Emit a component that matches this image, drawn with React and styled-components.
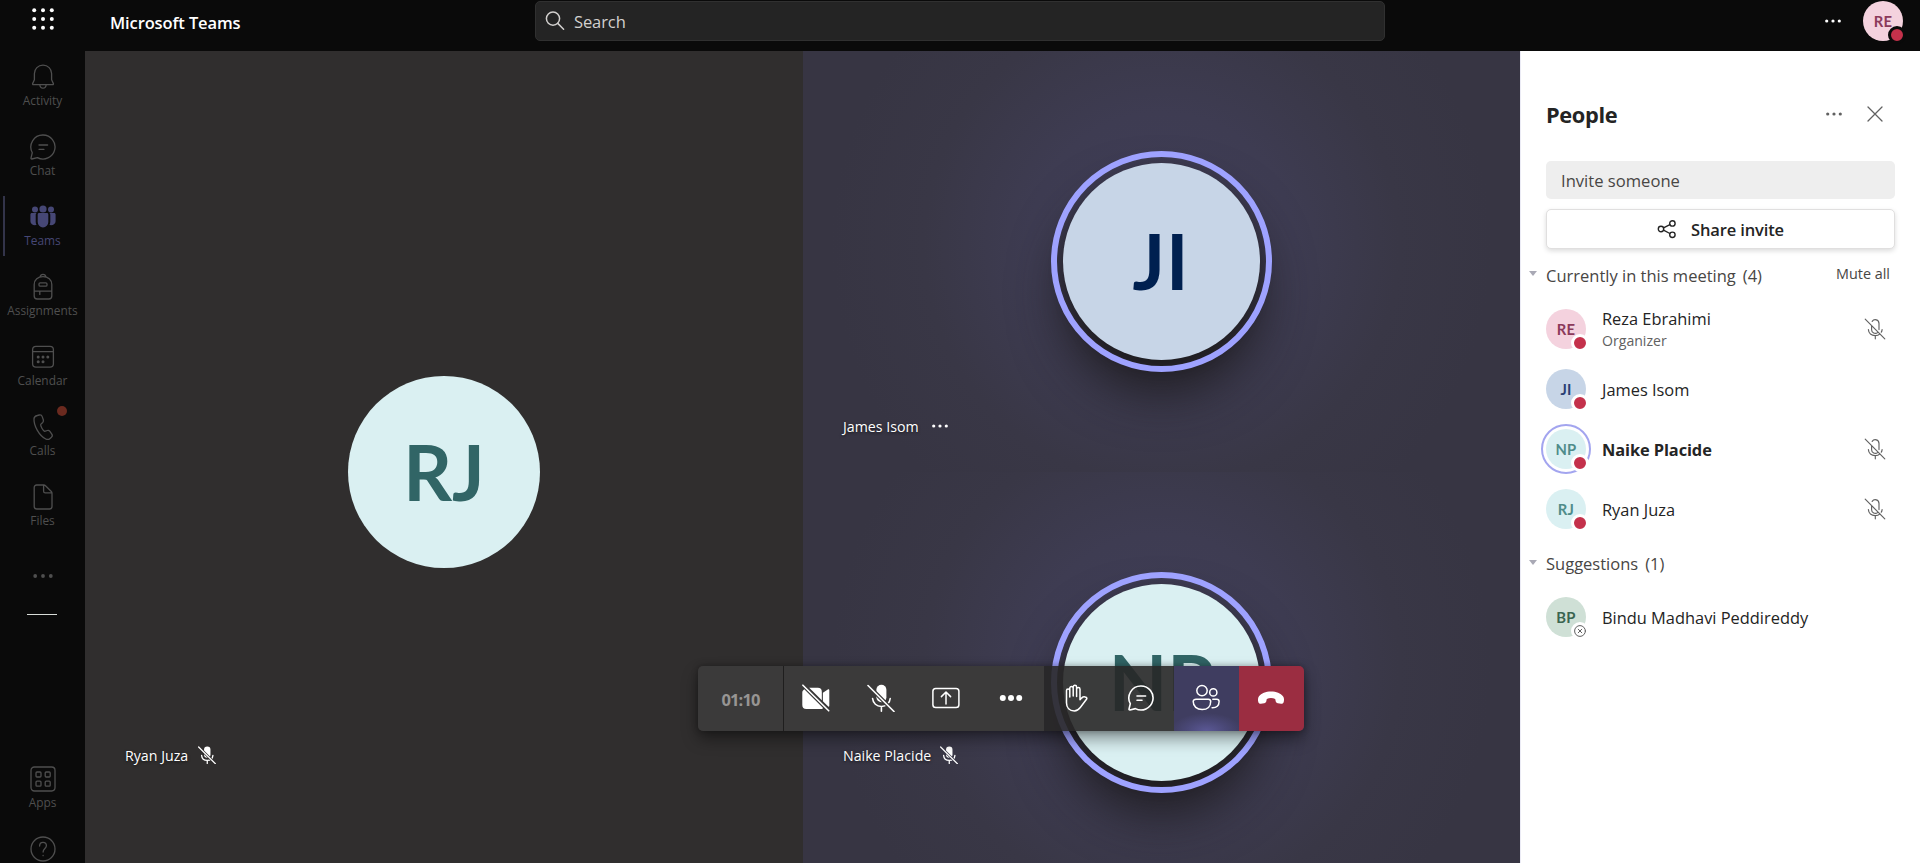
import React from "react";
import styled, { createGlobalStyle, css } from "styled-components";

const GlobalStyle = createGlobalStyle`
  * { box-sizing: border-box; }
  body {
    margin: 0;
    overflow: hidden;
    background: #0a0a0a;
    font-family: "Open Sans", "Noto Sans", "Liberation Sans", sans-serif;
    color: #242424;
  }
  button, input { font: inherit; color: inherit; border: 0; margin: 0; padding: 0; background: none; }
`;

const App = styled.div`
  display: flex;
  flex-direction: column;
  height: 100vh;
  overflow: hidden;
`;

/* ---------- header ---------- */
const Header = styled.header`
  flex: none;
  height: 51px;
  display: grid;
  grid-template-columns: 85px 450px 850px 1fr;
  align-items: start;
  background: #0a0a0a;
  color: #fff;
`;
const Waffle = styled.div`
  height: 38px;
  display: flex;
  justify-content: center;
  align-items: center;
  svg { margin-left: 1px; }
`;
const Brand = styled.div`
  padding-left: 25px;
  height: 45px;
  line-height: 45px;
  font-size: 16.5px;
  font-weight: 600;
  letter-spacing: -0.12px;
`;
const SearchBox = styled.div`
  margin-top: 1px;
  height: 40px;
  display: flex;
  align-items: center;
  gap: 9px;
  padding-left: 9px;
  border: 1px solid #303030;
  border-radius: 5px;
  background: #242424;
  color: #d2d0ce;
  font-size: 16.5px;
  letter-spacing: -0.1px;
`;
const HeaderEnd = styled.div`
  height: 42px;
  display: flex;
  align-items: center;
  justify-content: flex-end;
  gap: 20px;
  padding-right: 17px;
`;

/* ---------- layout ---------- */
const Body = styled.div`
  flex: 1;
  min-height: 0;
  display: grid;
  grid-template-columns: 85px 1435px 400px;
`;
const Rail = styled.nav`
  background: #0a0a0a;
  display: flex;
  flex-direction: column;
  height: 812px;
  overflow: hidden;
`;
const RailItem = styled.div`
  position: relative;
  flex: none;
  height: 70px;
  padding-top: 12px;
  display: flex;
  flex-direction: column;
  align-items: center;
  font-size: 11.9px;
  line-height: 18px;
  color: ${(p) => (p.$active ? "#464775" : "#4f4f4f")};
  svg { display: block; flex: none; }
  ${(p) => p.$active && css`
    &::before {
      content: "";
      position: absolute;
      left: 3px;
      top: 5px;
      width: 2px;
      height: 60px;
      background: #33344a;
    }
  `}
`;
const RailMore = styled(RailItem)`
  padding-top: 21px;
`;
const Alert = styled.span`
  position: absolute;
  left: 57px;
  top: 5px;
  width: 10px;
  height: 10px;
  border-radius: 50%;
  background: #6b2a1f;
`;
const RailLine = styled.div`
  flex: none;
  width: 30px;
  height: 1px;
  margin: 3px 0 138px 27px;
  background: #d8dcd8;
`;

/* ---------- stage ---------- */
const Stage = styled.main`
  position: relative;
  display: grid;
  grid-template-columns: 718px 717px;
  height: 842px;
  background: #302e2e;
`;
const Column = styled.div`
  display: grid;
  grid-auto-rows: 1fr;
`;
const Tile = styled.section`
  position: relative;
  display: flex;
  align-items: center;
  justify-content: center;
  background: ${(p) =>
    p.$speaking
      ? "radial-gradient(circle 330px at 50% 46%, #403e58 0%, #3e3c52 40%, #393746 72%, #373543 100%)"
      : "#302e2e"};
`;
const BigAvatar = styled.div`
  width: ${(p) => p.$size}px;
  height: ${(p) => p.$size}px;
  border-radius: 50%;
  display: flex;
  align-items: center;
  justify-content: center;
  padding-bottom: 1px;
  padding-right: ${(p) => p.$shift || 0}px;
  font-family: Lato, "Open Sans", sans-serif;
  font-weight: 700;
  font-size: 76px;
  line-height: 1;
  letter-spacing: ${(p) => p.$spacing || 0}px;
  background: ${(p) => p.$bg};
  color: ${(p) => p.$fg};
  ${(p) => p.$ring && css`
    position: relative;
    box-shadow: 0 32px 52px rgba(26, 24, 24, 0.85), 0 6px 14px rgba(26, 24, 24, 0.35);
    &::after {
      content: "";
      position: absolute;
      inset: -12px;
      border: 6px solid #9ea2ff;
      border-radius: 50%;
    }
  `}
`;
const Caption = styled.div`
  position: absolute;
  left: ${(p) => p.$left}px;
  bottom: ${(p) => p.$bottom}px;
  height: 20px;
  display: flex;
  align-items: center;
  gap: ${(p) => p.$gap || 9}px;
  font-size: 14.2px;
  color: #fff;
  text-shadow: 0 1px 3px rgba(0, 0, 0, 0.6);
`;

const Toolbar = styled.div`
  position: absolute;
  left: 613px;
  top: 615px;
  height: 65px;
  display: flex;
  border-radius: 5px;
  overflow: hidden;
  color: #fff;
`;
const ToolbarShadow = styled.div`
  position: absolute;
  left: 613px;
  top: 615px;
  width: 606px;
  height: 65px;
  border-radius: 5px;
  box-shadow: 0 8px 16px rgba(0, 0, 0, 0.4), 0 0 6px rgba(0, 0, 0, 0.3);
`;
const Timer = styled.div`
  width: 86px;
  display: flex;
  align-items: center;
  justify-content: center;
  padding-top: 1px;
  background: #3b3a3a;
  border-right: 1px solid #1f1e1e;
  color: #979593;
  font-size: 16.5px;
  font-weight: 700;
  letter-spacing: -0.9px;
`;
const toolTones = {
  main: "rgba(59, 58, 58, 0.98)",
  side: "rgba(40, 39, 39, 0.9)",
  active: "radial-gradient(ellipse 36px 18px at 50% 100%, #5b5896 0%, #4a4877 55%, rgba(64,62,97,0) 100%), #3f3d60",
  leave: "#9b2d41",
};
const Tool = styled.button`
  width: 65px;
  height: 65px;
  display: flex;
  align-items: center;
  justify-content: center;
  padding: 0 1px 1px 0;
  background: ${(p) => toolTones[p.$tone || "main"]};
`;

/* ---------- people panel ---------- */
const Panel = styled.aside`
  background: #fff;
  border-left: 1px solid #ebebf5;
  padding: 42px 25px 0 25px;
  height: 812px;
`;
const PanelHead = styled.div`
  height: 42px;
  display: flex;
  align-items: center;
  color: #616161;
  h2 {
    margin: 1px auto 0 0;
    font-size: 21.8px;
    line-height: 30px;
    font-weight: 700;
    letter-spacing: -0.35px;
    color: #242424;
  }
  svg { margin-right: 11px; }
  svg + svg { margin-left: 12px; margin-right: 12px; }
`;
const Invite = styled.div`
  margin-top: 26px;
  height: 38px;
  line-height: 39px;
  padding-left: 15px;
  border-radius: 5px;
  background: #eeeeee;
  color: #484644;
  font-size: 16.6px;
`;
const ShareButton = styled.button`
  margin-top: 10px;
  width: 100%;
  height: 40px;
  display: flex;
  align-items: center;
  justify-content: center;
  gap: 14px;
  border: 1px solid #e0dfdf;
  border-radius: 5px;
  background: #fff;
  box-shadow: 0 2px 5px rgba(0, 0, 0, 0.14);
  font-size: 16.5px;
  font-weight: 600;
  letter-spacing: -0.15px;
  span { padding-top: 1px; }
`;
const SectionHead = styled.div`
  position: relative;
  height: ${(p) => p.$height}px;
  padding-top: ${(p) => p.$drop || 0}px;
  display: flex;
  align-items: center;
  gap: 7px;
  font-size: 16.5px;
  color: #484644;
`;
const Caret = styled.i`
  position: absolute;
  left: -17px;
  top: calc(50% - 3px);
  border: 4px solid transparent;
  border-top: 5px solid #a9a9b5;
  border-bottom: 0;
`;
const MuteAll = styled.span`
  margin: -3px 5px 0 auto;
  font-size: 14.4px;
`;
const PersonRow = styled.div`
  height: 60px;
  display: flex;
  align-items: center;
  padding-right: 10px;
`;
const PersonText = styled.div`
  margin-left: 16px;
  margin-right: auto;
  font-size: 16.4px;
  line-height: 22px;
  padding-top: ${(p) => (p.$double ? 2 : 1)}px;
  font-weight: ${(p) => (p.$bold ? 700 : 400)};
  letter-spacing: ${(p) => (p.$bold ? -0.1 : 0)}px;
  small { display: block; font-size: 14.1px; line-height: 22px; color: #616161; }
`;
const SmallAvatar = styled.div`
  position: relative;
  width: 40px;
  height: 40px;
  border-radius: 50%;
  display: flex;
  align-items: center;
  justify-content: center;
  font-family: Lato, "Open Sans", sans-serif;
  font-size: 14.8px;
  font-weight: 700;
  letter-spacing: 0.2px;
  background: ${(p) => p.$bg};
  color: ${(p) => p.$fg};
  ${(p) => p.$ring && css`
    &::before {
      content: "";
      position: absolute;
      inset: -5px;
      border: 2px solid #a3a5ef;
      border-radius: 50%;
    }
  `}
`;
const Presence = styled.span`
  position: absolute;
  right: -3px;
  bottom: -3px;
  width: 18px;
  height: 18px;
  border-radius: 50%;
  border: 3px solid ${(p) => p.$edge || "#fff"};
  background: ${(p) => (p.$offline ? "#fff" : "#c4314b")};
  color: #616161;
  svg { display: block; }
`;
const MutedMark = styled.span`
  display: flex;
  color: #616161;
  margin-right: -1px;
`;

/* ---------- icons ---------- */
const Svg = ({ size = 28, box, sw = 1.5, children }) => (
  <svg width={size} height={size} viewBox={box || `0 0 ${size} ${size}`} fill="none"
    stroke="currentColor" strokeWidth={sw} strokeLinecap="round" strokeLinejoin="round">
    {children}
  </svg>
);
const Dots = ({ gap = 6.3, r = 1.6, size = 20 }) => (
  <Svg size={size}>
    <g fill="currentColor" stroke="none">
      {[-1, 0, 1].map((n) => <circle key={n} cx={size / 2 + n * gap} cy={size / 2} r={r} />)}
    </g>
  </Svg>
);
const WaffleIcon = () => (
  <Svg size={24}>
    <g fill="currentColor" stroke="none">
      {[3.2, 12, 20.8].map((y) => [3.2, 12, 20.8].map((x) => <circle key={x + "-" + y} cx={x} cy={y} r="2" />))}
    </g>
  </Svg>
);
const SearchIcon = () => (
  <Svg size={20} sw={1.5}><circle cx="8" cy="7.6" r="6.6" /><path d="m12.8 12.4 5.8 5.8" /></Svg>
);
const BellIcon = () => (
  <Svg sw={1.3}><path d="M14 2.200c-4.900 0-8.600 3.700-8.600 8.400v6.200L3.600 20.600c-.2.5.1 1 .7 1h19.400c.6 0 .9-.5.7-1l-1.800-3.800v-6.200c0-4.700-3.700-8.400-8.600-8.400ZM10.800 21.800c.2 2 1.500 3.400 3.200 3.400s3-1.400 3.200-3.400" /></Svg>
);
const ChatIcon = ({ sw = 1.3 }) => (
  <Svg sw={sw}>
    <path d="M14 2A12 12 0 1 1 8.400 24.600L2.900 26c-.6.1-1-.4-.9-.9l1.300-5.400A12 12 0 0 1 14 2Z" />
    <path d="M10 12h8.600M10 16.300h5" />
  </Svg>
);
const TeamsIcon = () => (
  <Svg>
    <g fill="currentColor" stroke="none">
      <circle cx="6" cy="6.500" r="3" /><circle cx="14" cy="6" r="3.600" /><circle cx="22" cy="6.500" r="3" />
      <path d="M8.700 11.500c0-.8.6-1.400 1.400-1.400h7.800c.8 0 1.400.6 1.400 1.400v7.600a5.300 5.300 0 0 1-10.600 0Z" />
      <path d="M7.600 10.100H2.900c-.9 0-1.500.6-1.500 1.500v6.600c0 2.600 2.600 4.500 6.100 3.800-.5-1-.8-2-.8-3.200v-7.100c0-.6.3-1.200.9-1.600ZM20.400 10.100h4.700c.9 0 1.500.6 1.500 1.500v6.600c0 2.600-2.600 4.500-6.100 3.800.5-1 .8-2 .8-3.200v-7.100c0-.6-.3-1.200-.9-1.600Z" />
    </g>
  </Svg>
);
const BackpackIcon = () => (
  <Svg sw={1.3}>
    <path d="M5.200 11.500C5.200 6.800 9 3.600 14 3.600s8.800 3.200 8.800 7.900V23a3 3 0 0 1-3 3H8.200a3 3 0 0 1-3-3ZM5.200 18.200h17.600M10.800 18.400v3M11.200 3.800c.2-1.600 1.300-2.400 2.800-2.400s2.600.8 2.800 2.400" />
    <rect x="10" y="9.800" width="8" height="3.400" rx="1.200" />
  </Svg>
);
const CalendarIcon = () => (
  <Svg sw={1.3}>
    <rect x="3.600" y="3.400" width="20.800" height="20.800" rx="3.400" /><path d="M3.600 8.600h20.800" />
    <g fill="currentColor" stroke="none">
      {[[9.2, 14], [14, 14], [18.8, 14], [9.2, 18.7], [14, 18.7]].map(([x, y]) => <circle key={x + "," + y} cx={x} cy={y} r="1.500" />)}
    </g>
  </Svg>
);
const PhoneIcon = () => (
  <Svg sw={1.3}><path d="m8.300 2.500 1.900-.5c1.300-.3 2.600.3 3 1.600l1.100 3.200c.3 1 .1 2-.6 2.700l-2 1.900c-.2.9.3 2.300 1.200 3.900s1.900 2.700 2.700 3l2.700-.8c1-.3 2 .1 2.600.9l1.900 2.700c.7 1 .5 2.400-.4 3.200l-1.300 1.100c-1.200 1-2.900 1.300-4.300.6-3.300-1.600-6.200-4.700-8.600-8.900S4.800 9.200 5 5.800c.1-1.600 1.600-2.900 3.300-3.300Z" /></Svg>
);
const FileIcon = () => (
  <Svg sw={1.3}><path d="M7.600 2h7.200c.6 0 1.200.2 1.700.7l5.800 5.800c.4.4.7 1 .7 1.700v13.400A2.400 2.400 0 0 1 20.600 26h-13a2.400 2.400 0 0 1-2.400-2.400V4.400A2.400 2.400 0 0 1 7.600 2ZM14.600 2.200v6c0 1 .7 1.700 1.700 1.700h6.400" /></Svg>
);
const AppsIcon = () => (
  <Svg sw={1.3}>
    <rect x="2" y="2" width="24" height="24" rx="3.400" />
    {[[7, 7], [16.2, 7], [7, 16.2], [16.2, 16.2]].map(([x, y]) => <rect key={x + "," + y} x={x} y={y} width="5" height="5" rx="1" />)}
  </Svg>
);
const HelpIcon = () => (
  <Svg sw={1.3}><circle cx="14" cy="14" r="12" /><path d="M10.600 11c0-2.200 1.400-3.600 3.400-3.600s3.400 1.400 3.400 3.300c0 2.700-3.300 2.900-3.300 6.300M14.100 20.300v.4" /></Svg>
);
const CameraOffIcon = () => (
  <Svg sw={1.6}>
    <g fill="currentColor" stroke="none">
      <path d="M.8 6.800 3 4.600 21.600 23.400c-.8 1-1.600 1.500-2.800 1.500H4.300a4 4 0 0 1-4-4V8.500c0-.6.2-1.200.5-1.700Z" />
      <path d="M7.200 3.700h8.600a4 4 0 0 1 4 4v8.500Z" />
      <path d="m20.900 8.800 4.900-3.400c.7-.5 1.500 0 1.500.8v15.600c0 .5-.3.9-.8 1l-5.600-5.600Z" />
    </g>
    <path d="m.9 1.200 25.800 25.600" stroke="#3b3a3a" strokeWidth="4" />
    <path d="m.9 1.200 25.800 25.600" />
  </Svg>
);
const MicOffFilled = ({ size = 28, cut = "#3b3a3a", sw = 1.6 }) => (
  <Svg size={size} box="0 0 28 28" sw={sw}>
    <rect x="9.400" y=".8" width="10" height="17.500" rx="5" fill="currentColor" stroke="none" />
    <path d="M5.600 14.500c.4 4.700 4 8 8.800 8s8.400-3.300 8.800-8M14.400 22.500v4.700" />
    <path d="m1 1.500 26 26" stroke={cut} strokeWidth="4" />
    <path d="m1 1.500 26 26" />
  </Svg>
);
const MicOffOutline = () => (
  <Svg size={22} sw={1.15}>
    <path d="M7.600 7.500v4.200a3.700 3.700 0 0 0 6 2.900M8.200 3.400a3.700 3.700 0 0 1 6.800 2v6.200M4.400 11.600c.2 3.600 3 6 6.800 6 1.900 0 3.600-.6 4.800-1.700M18.100 11.600c-.1 1-.3 1.900-.8 2.600M11.300 17.700v3.100M1.200 1.200l19.600 19.600" />
  </Svg>
);
const ShareScreenIcon = () => (
  <Svg sw={1.5}><rect x=".9" y="4.400" width="26" height="19.200" rx="2.800" /><path d="M14 20V8.400M9.400 12.600 14 8l4.600 4.600" /></Svg>
);
const HandIcon = () => (
  <Svg sw={1.5}>
    <path d="M3.500 15V6.600c0-1 .7-1.700 1.600-1.700s1.700.7 1.700 1.700V13M6.800 12V4.200c0-1 .8-1.700 1.700-1.700s1.700.7 1.700 1.700V12M10.200 12V2.900c0-1 .8-1.700 1.700-1.700s1.700.7 1.700 1.700V12.500M13.600 12.500V5.200c0-1 .8-1.700 1.700-1.700S17 4.200 17 5.200v10.600l1.600-1.700c1.200-1.200 3-1.500 4.400-.8.900.4 1.100 1.200.5 1.900l-6.200 8.300c-1.500 2-3.200 3.400-6 3.400-4.700 0-7.800-3-7.800-8.200V15" transform="translate(1 0)" />
  </Svg>
);
const PeopleIcon = () => (
  <Svg sw={1.5}>
    <circle cx="10" cy="6.600" r="5.200" /><circle cx="21.300" cy="8.400" r="3.600" />
    <path d="M4 15.200h12.400c1.300 0 2.300 1 2.300 2.300 0 4.900-3.200 8.100-8.500 8.100S1.200 22.400 1.200 17.500c0-1.300 1.300-2.300 2.800-2.300ZM20.800 15.200h4c1.300 0 2.300 1 2.300 2.300 0 4.200-2.500 6.400-7 6.200" />
  </Svg>
);
const HangUpIcon = () => (
  <Svg>
    <path fill="currentColor" stroke="none" d="M14 7.500c5.300 0 9.700 1.900 12 4.800 1 1.300 1.200 3 .9 4.700l-.2 1c-.3 1.300-1.400 2-2.600 1.800l-3.300-.6c-1.100-.2-1.900-1-2.100-2l-.5-2.300c-1.300-.6-2.700-.9-4.200-.9s-2.900.3-4.200.9L9.300 17.200c-.2 1-1 1.800-2.100 2l-3.300.6c-1.200.2-2.300-.5-2.600-1.800l-.2-1c-.3-1.700-.1-3.400.9-4.700 2.300-2.900 6.700-4.800 12-4.800Z" />
  </Svg>
);
const CloseIcon = () => <Svg size={16} sw={1.3}><path d="m1 1 14 14M15 1 1 15" /></Svg>;
const ShareIcon = () => (
  <Svg size={20} sw={1.4}>
    <circle cx="4" cy="10" r="2.700" /><circle cx="15.400" cy="4.400" r="2.700" /><circle cx="15.400" cy="15.800" r="2.700" />
    <path d="m6.500 8.800 6.400-3.200M6.500 11.200l6.400 3.300" />
  </Svg>
);
const OfflineIcon = () => (
  <Svg size={12} sw={1}><circle cx="6" cy="6" r="5.400" /><path d="m4.200 4.200 3.600 3.600M7.800 4.200 4.200 7.800" /></Svg>
);

const railTop = [
  ["Activity", BellIcon], ["Chat", ChatIcon], ["Teams", TeamsIcon], ["Assignments", BackpackIcon],
  ["Calendar", CalendarIcon], ["Calls", PhoneIcon], ["Files", FileIcon],
];
const people = [
  { name: "Reza Ebrahimi", role: "Organizer", initials: "RE", bg: "#f4d2de", fg: "#8c3a5b", muted: true },
  { name: "James Isom", initials: "JI", bg: "#c7d5e7", fg: "#2b3f74" },
  { name: "Naike Placide", initials: "NP", bg: "#daf0f2", fg: "#4f8c8a", muted: true, speaking: true },
  { name: "Ryan Juza", initials: "RJ", bg: "#daf0f2", fg: "#4f8c8a", muted: true },
];

const Person = ({ name, role, initials, bg, fg, muted, speaking, offline }) => (
  <PersonRow>
    <SmallAvatar $bg={bg} $fg={fg} $ring={speaking}>
      {initials}
      <Presence $offline={offline}>{offline && <OfflineIcon />}</Presence>
    </SmallAvatar>
    <PersonText $bold={speaking} $double={!!role}>{name}{role && <small>{role}</small>}</PersonText>
    {muted && <MutedMark><MicOffOutline /></MutedMark>}
  </PersonRow>
);

export default function Meeting() {
  return (
    <App>
      <GlobalStyle />
      <Header>
        <Waffle><WaffleIcon /></Waffle>
        <Brand>Microsoft Teams</Brand>
        <SearchBox><SearchIcon />Search</SearchBox>
        <HeaderEnd>
          <Dots />
          <SmallAvatar $bg="#f4d2de" $fg="#8c3a5b">RE<Presence $edge="#0a0a0a" /></SmallAvatar>
        </HeaderEnd>
      </Header>
      <Body>
        <Rail>
          {railTop.map(([label, Icon]) => (
            <RailItem key={label} $active={label === "Teams"}>
              <Icon />{label}
              {label === "Calls" && <Alert />}
            </RailItem>
          ))}
          <RailMore><Dots size={28} gap={7.8} r={1.9} /></RailMore>
          <RailLine />
          <RailItem><AppsIcon />Apps</RailItem>
          <RailItem><HelpIcon /></RailItem>
        </Rail>
        <Stage>
          <Tile>
            <BigAvatar $size={192} $bg="#daf0f2" $fg="#316566">RJ</BigAvatar>
            <Caption $left={40} $bottom={128} $gap={10}>Ryan Juza<MicOffFilled size={18} cut="#302e2e" sw={2} /></Caption>
          </Tile>
          <Column>
            <Tile $speaking>
              <BigAvatar $size={197} $ring $bg="#c7d5e7" $fg="#002050" $spacing={1} $shift={1}>JI</BigAvatar>
              <Caption $left={40} $bottom={36} $gap={11}>James Isom<Dots /></Caption>
            </Tile>
            <Tile $speaking>
              <BigAvatar $size={197} $ring $bg="#daf0f2" $fg="#316566">NP</BigAvatar>
              <Caption $left={40} $bottom={128}>Naike Placide<MicOffFilled size={18} cut="#393746" sw={2} /></Caption>
            </Tile>
          </Column>
          <ToolbarShadow />
          <Toolbar>
            <Timer>01:10</Timer>
            <Tool><CameraOffIcon /></Tool>
            <Tool><MicOffFilled /></Tool>
            <Tool><ShareScreenIcon /></Tool>
            <Tool><Dots size={28} gap={8.2} r={3} /></Tool>
            <Tool $tone="side"><HandIcon /></Tool>
            <Tool $tone="side"><ChatIcon sw={1.6} /></Tool>
            <Tool $tone="active"><PeopleIcon /></Tool>
            <Tool $tone="leave"><HangUpIcon /></Tool>
          </Toolbar>
        </Stage>
        <Panel>
          <PanelHead><h2>People</h2><Dots /><CloseIcon /></PanelHead>
          <Invite>Invite someone</Invite>
          <ShareButton><ShareIcon /><span>Share invite</span></ShareButton>
          <SectionHead $height={50} $drop={2}>
            <Caret /><span>Currently in this meeting</span><span>(4)</span><MuteAll>Mute all</MuteAll>
          </SectionHead>
          {people.map((p) => <Person key={p.name} {...p} />)}
          <SectionHead $height={48}><Caret /><span>Suggestions</span><span>(1)</span></SectionHead>
          <Person name="Bindu Madhavi Peddireddy" initials="BP" bg="#cfe0d6" fg="#3b6550" offline />
        </Panel>
      </Body>
    </App>
  );
}
